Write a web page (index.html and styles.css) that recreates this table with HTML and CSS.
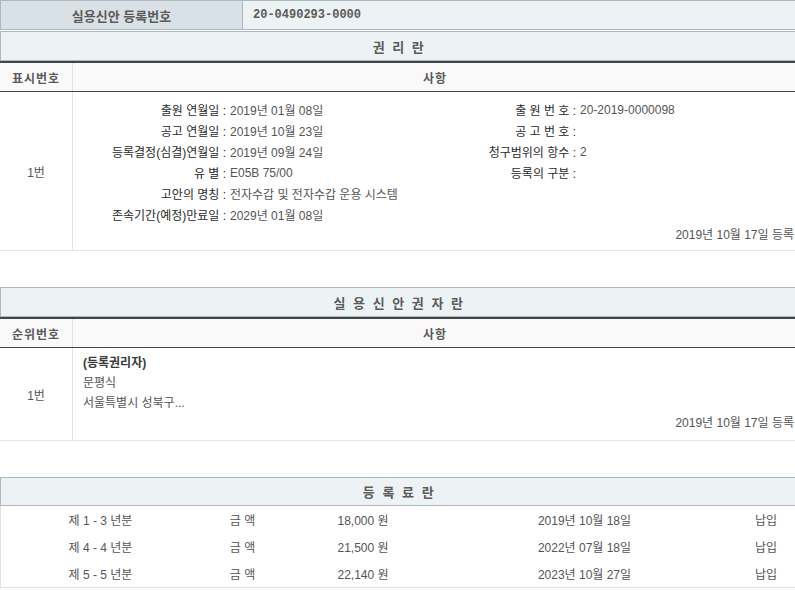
FILE: index.html
```html
<!DOCTYPE html>
<html lang="ko">
<head>
<meta charset="utf-8">
<title>실용신안 등록원부</title>
<link rel="stylesheet" href="styles.css">
</head>
<body>
<div class="page">
  <div class="regno">
    <div class="regno-label">실용신안 등록번호</div>
    <div class="regno-value">20-0490293-0000</div>
  </div>

  <section class="sec">
    <div class="sec-title">권 리 란</div>
    <div class="head">
      <div class="c-no">표시번호</div>
      <div class="c-main">사항</div>
    </div>
    <div class="row row-rights">
      <div class="c-no">1번</div>
      <div class="c-body">
        <div class="info">
          <div class="lb">출원 연월일 :</div><div class="vl">2019년 01월 08일</div>
          <div class="lb">출 원 번 호 :</div><div class="vl">20-2019-0000098</div>
          <div class="lb">공고 연월일 :</div><div class="vl">2019년 10월 23일</div>
          <div class="lb">공 고 번 호 :</div><div class="vl"></div>
          <div class="lb">등록결정(심결)연월일 :</div><div class="vl">2019년 09월 24일</div>
          <div class="lb">청구범위의 항수 :</div><div class="vl">2</div>
          <div class="lb">유 별 :</div><div class="vl">E05B 75/00</div>
          <div class="lb">등록의 구분 :</div><div class="vl"></div>
          <div class="lb">고안의 명칭 :</div><div class="vl span3">전자수갑 및 전자수갑 운용 시스템</div>
          <div class="lb">존속기간(예정)만료일 :</div><div class="vl span3">2029년 01월 08일</div>
        </div>
        <div class="regdate">2019년 10월 17일 등록</div>
      </div>
    </div>
  </section>

  <section class="sec">
    <div class="sec-title">실 용 신 안 권 자 란</div>
    <div class="head">
      <div class="c-no">순위번호</div>
      <div class="c-main">사항</div>
    </div>
    <div class="row row-owner">
      <div class="c-no">1번</div>
      <div class="c-body owner">
        <div class="owner-role">(등록권리자)</div>
        <div class="owner-line">문평식</div>
        <div class="owner-line">서울특별시 성북구...</div>
        <div class="regdate">2019년 10월 17일 등록</div>
      </div>
    </div>
  </section>

  <section class="sec">
    <div class="sec-title sec-title-fee">등 록 료 란</div>
    <div class="fees">
      <div class="fee-row">
        <div class="f-term">제 1 - 3 년분</div><div class="f-lbl">금 액</div><div class="f-amt">18,000 원</div><div class="f-date">2019년 10월 18일</div><div class="f-stat">납입</div>
      </div>
      <div class="fee-row">
        <div class="f-term">제 4 - 4 년분</div><div class="f-lbl">금 액</div><div class="f-amt">21,500 원</div><div class="f-date">2022년 07월 18일</div><div class="f-stat">납입</div>
      </div>
      <div class="fee-row">
        <div class="f-term">제 5 - 5 년분</div><div class="f-lbl">금 액</div><div class="f-amt">22,140 원</div><div class="f-date">2023년 10월 27일</div><div class="f-stat">납입</div>
      </div>
    </div>
  </section>
</div>
</body>
</html>
```

FILE: styles.css
```css
* { box-sizing: border-box; }
html, body {
  margin: 0;
  padding: 0;
  background: #ffffff;
  overflow: hidden;
}
body {
  font-family: "Liberation Sans", "Noto Sans CJK KR", sans-serif;
  font-size: 12px;
  color: #555;
}
.page {
  width: 797px;
}

/* registration number bar */
.regno {
  display: flex;
  height: 30px;
  border: 1px solid #aab8c2;
  background: #edf2f5;
  margin-bottom: 1px;
}
.regno-label {
  width: 242px;
  border-right: 1px solid #aab8c2;
  background: #d9e1e7;
  font-weight: bold;
  font-size: 13px;
  color: #5a5a5a;
  display: flex;
  align-items: center;
  justify-content: center;
  font-family: "Noto Sans CJK KR", sans-serif;
}
.regno-value {
  flex: 1;
  display: flex;
  align-items: center;
  padding-left: 10px;
  font-family: "Liberation Mono", monospace;
  font-weight: bold;
  font-size: 12px;
  color: #5a5a5a;
}

/* sections */
.sec + .sec { margin-top: 36px; }
.sec-title {
  height: 30px;
  border: 1px solid #aab8c2;
  background: #edf2f5;
  display: flex;
  align-items: center;
  justify-content: center;
  font-family: "Noto Sans CJK KR", sans-serif;
  font-weight: bold;
  font-size: 13px;
  word-spacing: 3px;
  letter-spacing: 0.5px;
  color: #5a5a5a;
}
.sec-title-fee { height: 29px; }

.head {
  display: flex;
  height: 31px;
  border-top: 2px solid #444;
  border-bottom: 1px solid #444;
  background: #f9f9f9;
  font-family: "Noto Sans CJK KR", sans-serif;
  font-weight: bold;
  font-size: 12px;
  letter-spacing: 1px;
  color: #5a5a5a;
}
.head .c-main {
  flex: 1;
  display: flex;
  align-items: center;
  justify-content: center;
}
.c-no {
  width: 73px;
  flex: none;
  border-right: 1px solid #e2e2e2;
  display: flex;
  align-items: center;
  justify-content: center;
}

.row {
  display: flex;
  border-bottom: 1px solid #e4e4e4;
}
.row-rights { height: 159px; }
.row-owner { height: 93px; }
.row .c-no { color: #555; }

.c-body {
  flex: 1;
  display: flex;
  flex-direction: column;
  padding-top: 7px;
}

.info {
  display: grid;
  grid-template-columns: 153px 194px 156px 1fr;
  grid-auto-rows: 21px;
  align-items: center;
}
.lb {
  text-align: right;
  color: #2a2a2a;
  white-space: nowrap;
}
.vl {
  padding-left: 4px;
  white-space: nowrap;
  color: #555;
}
.span3 { grid-column: span 3; }

.regdate {
  line-height: 21px;
  text-align: right;
  padding-right: 3px;
  color: #555;
  white-space: nowrap;
}

.owner {
  padding-top: 5px;
  padding-left: 10px;
}
.owner-role,
.owner-line {
  line-height: 20px;
}
.owner-role {
  color: #3a3a3a;
  font-weight: bold;
}
.owner .regdate { line-height: 20px; }

/* fees */
.fees {
  border-left: 1px solid #e4e4e4;
  border-bottom: 1px solid #e4e4e4;
}
.fee-row {
  display: grid;
  grid-template-columns: 199px 85px 156px 287px 1fr;
  height: 27px;
  align-items: center;
  color: #555;
}
.f-term, .f-lbl, .f-amt, .f-date { text-align: center; }
.f-stat { padding-left: 27px; }
```
